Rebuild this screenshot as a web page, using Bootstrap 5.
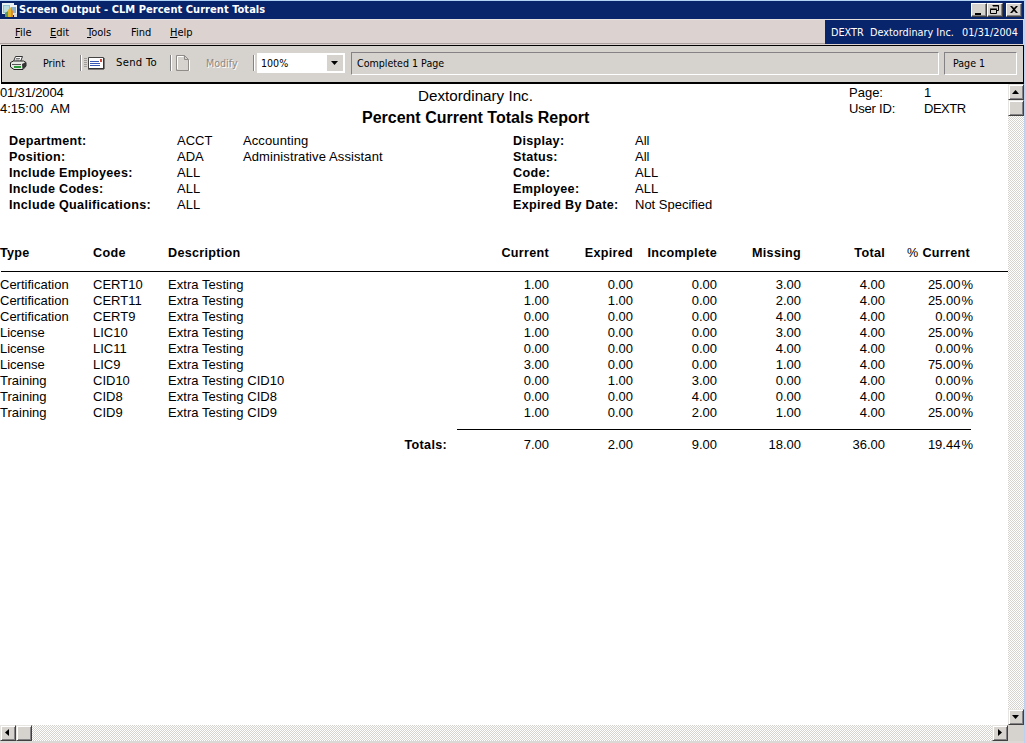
<!DOCTYPE html>
<html lang="en">
<head>
<meta charset="utf-8">
<title>Screen Output - CLM Percent Current Totals</title>
<link href="https://cdn.jsdelivr.net/npm/bootstrap@5.3.0/dist/css/bootstrap.min.css" rel="stylesheet">
<style>
body{width:1025px;height:743px;overflow:hidden;background:#fff;color:#000;font:10.6px/14px "DejaVu Sans Condensed","DejaVu Sans",sans-serif;white-space:nowrap}
svg{display:block;flex:none}
.win{width:1025px;height:743px;border-top:1px solid #b3d3f5;border-right:1px solid #bcd2ee}
.titlebar{height:18px;background:#08246b;color:#fff;font-weight:700;font-size:11px;letter-spacing:.05px;padding:0 2px 0 2px}
.capbtn{width:16px;height:14px;background:#d6d3ce;border:1px solid;border-color:#fff #404040 #404040 #fff;box-shadow:inset -1px -1px #848284;margin-top:-1px}
.menus{height:26px;background:#dcd3d0;border-top:1px solid #e6e0de}
.menus .mitem{font-size:11px}
.menuleft{width:825px;border-bottom:1px solid #a9a29f;padding:2px 0 0 15px;height:24px}
.company{width:198px;height:24px;background:#08246b;color:#fff;padding:2px 0 0 6px;font-size:10.8px}
.tools{height:39px;margin-left:1px;background:#d6d3ce;border:1px solid #000;border-bottom-width:2px;padding-bottom:2px}
.sep{width:2px;height:16px;border-left:1px solid #848284;border-right:1px solid #fff}
.off{color:#8c8986;text-shadow:1px 1px #fff}
.zoomsel{width:88px;height:20px;background:#fff;padding:2px}
.zoomsel .drop{width:16px;height:16px;background:#d6d3ce}
.inset{height:23px;margin-top:1px;border:1px solid;border-color:#848284 #fff #fff #848284;padding:0 0 1px 5px}
.paper{font:13px/16px "Liberation Sans",Arial,sans-serif;width:1008px;height:641px}
.paper b{font-size:12.6px;letter-spacing:.3px}
.runhead{height:49px;padding-top:1px}
.runhead .stamp{width:362px}
.runhead .names{width:227px}
.company-name{font-size:15.2px;line-height:21px}
.report-name{font-size:16px!important;line-height:24px;letter-spacing:0!important}
.pagebox{width:159px}
.pagebox .key{width:75px}
.params{padding-left:9px;height:112px}
.report{table-layout:fixed;width:1008px;border-collapse:separate;border-spacing:0}
.report td,.report th{padding:0;height:16px;line-height:16px;text-align:right}
.report th{font-size:12.6px;font-weight:700;letter-spacing:.3px;height:26px;padding-bottom:10px}
.report .lt{text-align:left}
.report td.desc{letter-spacing:.05px}
.ruler{height:1px;background:#000}
.track{background:repeating-conic-gradient(#fff 0 25%,#d6d3ce 0 50%) 0 0/2px 2px}
.vbar{width:16px;height:641px}
.sbtn{width:16px;height:16px;background:#d6d3ce;border:1px solid;border-color:#e7e5e2 #404040 #404040 #e7e5e2;box-shadow:inset 1px 1px #fff,inset -1px -1px #848284;flex:none}
.hbar{height:16px}
.foot{height:2px;background:#dcd8d6}
</style>
<script src="https://cdn.jsdelivr.net/npm/bootstrap@5.3.0/dist/js/bootstrap.bundle.min.js"></script>
</head>
<body>
<div class="win d-flex flex-column">
  <div class="titlebar d-flex align-items-center">
    <svg width="17" height="16" viewBox="0 0 17 16"><path d="M0 1h12v11H0z" fill="#e9f4f2"/><path d="M1 3h10v8H1z" fill="#8fc4d6"/><path d="M2 4h5v6H2z" fill="#b9dde0"/><path d="M8 3h7v10H8z" fill="#eef2f4"/><path d="M9 5h5v6H9z" fill="#8ab2cf"/><path d="M3 15v-4l3-2v6z" fill="#5c9a5a"/><path d="M6 15V8l3-3v10z" fill="#e7b52b"/><path d="M9 15V6l2 3v6z" fill="#d98a35"/><path d="M12 15v-4l3 1v3z" fill="#d5d9dc"/></svg>
    <span>Screen Output - CLM Percent Current Totals</span>
    <div class="d-flex ms-auto">
      <div class="capbtn"><svg width="14" height="12"><path d="M3 9h6v2H3z"/></svg></div>
      <div class="capbtn"><svg width="14" height="12" fill="none" stroke="#000"><path d="M5 2h6M4.500 1.500h6v5h-2M2.500 5.500h6v4h-6zM2 5h7"/></svg></div>
      <div class="capbtn" style="margin-left:3px"><svg width="14" height="12"><path d="M3 2h2l2 2 2-2h2L8 5.500l3 3.500H9L7 7 5 9H3l3-3.500z"/></svg></div>
    </div>
  </div>
  <div class="menus d-flex">
    <div class="menuleft d-flex align-items-center">
      <span class="mitem" style="width:35px"><u>F</u>ile</span><span class="mitem" style="width:37px"><u>E</u>dit</span><span class="mitem" style="width:44px"><u>T</u>ools</span><span class="mitem" style="width:39px">Find</span><span class="mitem"><u>H</u>elp</span>
    </div>
    <div class="company d-flex align-items-center"><span style="width:39px">DEXTR</span><span style="width:92px">Dextordinary Inc.</span><span>01/31/2004</span></div>
  </div>
  <div class="tools d-flex align-items-center">
    <svg style="margin-left:8px" width="17" height="16" viewBox="0 0 17 16"><path d="M5.500 1.500h7l-2 5h-7z" fill="#fff" stroke="#333"/><path d="M6 3.500h4M5.500 5h4" stroke="#777"/><path d="M.5 7.500l3-1.500h10l2.500 1.500V11l-3 3.500H4L.5 12z" fill="#e7e7e3" stroke="#222"/><path d="M12 9l4-2v4l-3.500 3.500z" fill="#333"/><path d="M2 9.500h9" stroke="#555"/><path d="M4 11h7v2H4z" fill="#2f9a3c"/></svg>
    <span style="margin-left:16px;width:37px">Print</span>
    <i class="sep"></i>
    <svg style="margin-left:2px" width="21" height="14" viewBox="0 0 21 14"><path d="M0 2.500h3M0 4.500h3M0 6.500h3M0 8.500h3M0 10.500h3" stroke="#a09d9a"/><path d="M4.500 1.500h15v11h-15z" fill="#fff" stroke="#444"/><path d="M4 13h16V2" fill="none" stroke="#222"/><path d="M6 5.500h9M6 7.500h10M6 9.500h10" stroke="#3757b5"/><path d="M16 3h2v3h-2z" fill="#d04a35"/></svg>
    <span style="margin-left:11px;width:54px;font-size:11.2px;letter-spacing:.3px">Send To</span>
    <i class="sep"></i>
    <svg style="margin-left:4px" width="14" height="16"><path d="M12.500 5V15.500H.5V.5h8l4 4h-4V.5" fill="none" stroke="#8f8c89"/><path d="M1.500 14V1.500h6M13.500 5v11" fill="none" stroke="#fff"/></svg>
    <span class="off" style="margin-left:16px;width:47px">Modify</span>
    <i class="sep"></i>
    <div class="zoomsel d-flex align-items-center justify-content-between ps-1" style="margin-left:2px"><span>100%</span><div class="drop d-flex align-items-center justify-content-center"><svg width="8" height="4"><path d="M0 0h7L3.500 4z"/></svg></div></div>
    <div class="inset d-flex align-items-center" style="margin-left:6px;width:588px">Completed 1 Page</div>
    <div class="inset d-flex align-items-center" style="margin-left:5px;width:73px;padding-left:8px">Page 1</div>
  </div>
  <div class="d-flex">
    <main class="paper">
      <div class="runhead d-flex">
        <div class="stamp"><span style="letter-spacing:-.15px">01/31/2004</span><br>4:15:00 &nbsp;AM</div>
        <div class="names text-center"><div class="company-name">Dextordinary Inc.</div><b class="report-name d-block">Percent Current Totals Report</b></div>
        <div class="pagebox ms-auto"><div class="d-flex"><span class="key">Page:</span><span>1</span></div><div class="d-flex"><span class="key" style="letter-spacing:-.2px">User ID:</span><span style="letter-spacing:-.5px">DEXTR</span></div></div>
      </div>
      <div class="params d-flex">
        <div style="width:168px"><b>Department:<br>Position:<br>Include Employees:<br>Include Codes:<br>Include Qualifications:</b></div>
        <div style="width:66px">ACCT<br>ADA<br>ALL<br>ALL<br>ALL</div>
        <div style="width:270px;letter-spacing:.1px">Accounting<br>Administrative Assistant</div>
        <div style="width:122px"><b>Display:<br>Status:<br>Code:<br>Employee:<br>Expired By Date:</b></div>
        <div>All<br>All<br>ALL<br>ALL<br>Not Specified</div>
      </div>
      <table class="report">
        <colgroup><col style="width:93px"><col style="width:75px"><col style="width:289px"><col style="width:92px"><col style="width:84px"><col style="width:84px"><col style="width:84px"><col style="width:84px"><col style="width:88px"><col></colgroup>
        <thead><tr><th class="lt">Type</th><th class="lt">Code</th><th class="lt">Description</th><th>Current</th><th>Expired</th><th>Incomplete</th><th>Missing</th><th>Total</th><th style="padding-right:3px"><span class="fw-normal">%</span> Current</th><th></th></tr></thead>
        <tbody id="rows"></tbody>
      </table>
    </main>
    <div class="vbar track"><div class="sbtn"><svg width="14" height="14"><path d="M3 9h7L6.500 5z"/></svg></div><div class="sbtn"></div><div class="sbtn" style="margin-top:593px"><svg width="14" height="14"><path d="M3 5h7L6.500 9z"/></svg></div></div>
  </div>
  <div class="hbar track d-flex"><div class="sbtn"><svg width="14" height="14"><path d="M8 3v7L4 6.500z"/></svg></div><div class="sbtn"></div><div class="sbtn ms-auto"><svg width="14" height="14"><path d="M5 3v7l4-3.500z"/></svg></div><div style="width:16px;background:#d6d3ce"></div></div>
  <div class="foot"></div>
</div>
<script>
const data=[
['Certification','CERT10','Extra Testing','1.00','0.00','0.00','3.00','4.00','25.00'],
['Certification','CERT11','Extra Testing','1.00','1.00','0.00','2.00','4.00','25.00'],
['Certification','CERT9','Extra Testing','0.00','0.00','0.00','4.00','4.00','0.00'],
['License','LIC10','Extra Testing','1.00','0.00','0.00','3.00','4.00','25.00'],
['License','LIC11','Extra Testing','0.00','0.00','0.00','4.00','4.00','0.00'],
['License','LIC9','Extra Testing','3.00','0.00','0.00','1.00','4.00','75.00'],
['Training','CID10','Extra Testing CID10','0.00','1.00','3.00','0.00','4.00','0.00'],
['Training','CID8','Extra Testing CID8','0.00','0.00','4.00','0.00','4.00','0.00'],
['Training','CID9','Extra Testing CID9','1.00','0.00','2.00','1.00','4.00','25.00']];
const cells=r=>r.map((v,i)=>`<td class="${i<3?'lt':''}${i===2?' desc':''}">${v}${i===8?'<span style="margin-left:1px">%</span>':''}</td>`).join('')+'<td></td>';
document.getElementById('rows').innerHTML=
 '<tr><td colspan="10" style="height:6px;line-height:0;vertical-align:top"><div class="ruler" style="margin-left:1px"></div></td></tr>'+
 data.map(r=>`<tr>${cells(r)}</tr>`).join('')+
 '<tr><td colspan="3" style="height:16px"></td><td colspan="6" style="vertical-align:top;padding:8px 2px 0 0;line-height:0"><div class="ruler"></div></td><td></td></tr>'+
 '<tr><td></td><td></td><td style="padding-right:10px"><b>Totals:</b></td>'+['7.00','2.00','9.00','18.00','36.00'].map(v=>`<td>${v}</td>`).join('')+'<td>19.44<span style="margin-left:1px">%</span></td><td></td></tr>';
</script>
</body>
</html>
